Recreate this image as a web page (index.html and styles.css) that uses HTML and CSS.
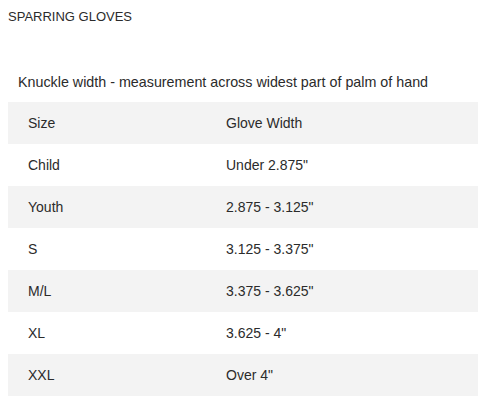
FILE: index.html
```html
<!DOCTYPE html>
<html lang="en">
<head>
    <meta charset="UTF-8">
    <title>Sparring Gloves Size Chart</title>
    <link rel="stylesheet" href="styles.css">
</head>
<body>
    <div class="size-chart">
        <h2 class="chart-title">SPARRING GLOVES</h2>
        <p class="chart-note">Knuckle width - measurement across widest part of palm of hand</p>
        <table class="chart-table">
            <tr><td class="col-size">Size</td><td>Glove Width</td></tr>
            <tr><td class="col-size">Child</td><td>Under 2.875"</td></tr>
            <tr><td class="col-size">Youth</td><td>2.875 - 3.125"</td></tr>
            <tr><td class="col-size">S</td><td>3.125 - 3.375"</td></tr>
            <tr><td class="col-size">M/L</td><td>3.375 - 3.625"</td></tr>
            <tr><td class="col-size">XL</td><td>3.625 - 4"</td></tr>
            <tr><td class="col-size">XXL</td><td>Over 4"</td></tr>
        </table>
    </div>
</body>
</html>
```

FILE: styles.css
```css
body {
    margin: 0;
    padding: 0 11px 0 8px;
    background-color: white;
    font-family: "Liberation Sans", Arial, sans-serif;
    color: #2b2b2b;
}
.chart-title {
    margin: 9px 0 0 0;
    font-size: 13px;
    font-weight: normal;
    line-height: 16px;
}
.chart-note {
    margin: 49px 0 0 10px;
    font-size: 14.3px;
    line-height: 16px;
}
.chart-table {
    width: 100%;
    margin-top: 12px;
    border-collapse: collapse;
    font-size: 14px;
}
.chart-table td {
    height: 42px;
    padding: 0 20px;
    box-sizing: border-box;
}
.chart-table .col-size {
    width: 198px;
}
.chart-table tr:nth-child(odd) {
    background-color: #f3f3f3;
}
```
